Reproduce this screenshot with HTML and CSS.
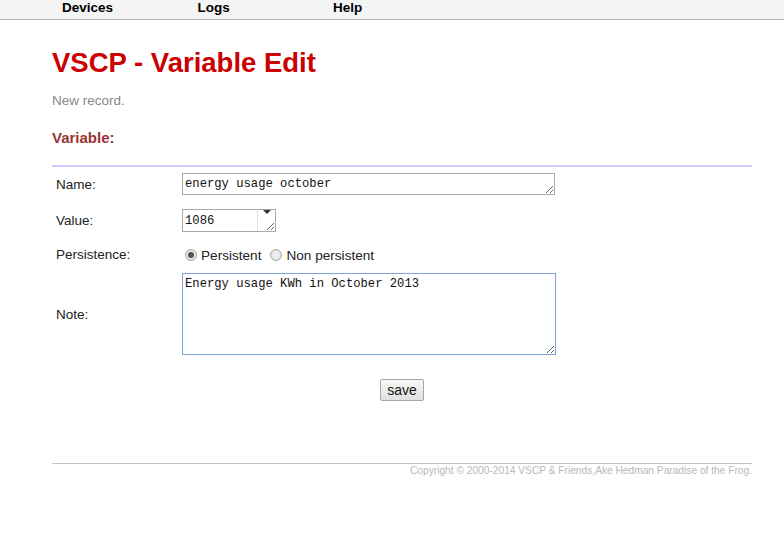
FILE: index.html
```html
<!DOCTYPE html>
<html lang="en">
<head>
<meta charset="utf-8">
<title>VSCP - Variable Edit</title>
<link rel="stylesheet" href="styles.css">
</head>
<body>
<nav class="topnav">
  <ul class="menu">
    <li><a href="#">Devices</a></li>
    <li><a href="#">Logs</a></li>
    <li><a href="#">Help</a></li>
  </ul>
</nav>
<main class="content">
  <h1 class="title">VSCP - Variable Edit</h1>
  <p class="status">New record.</p>
  <h2 class="section">Variable:</h2>
  <hr class="divider">
  <form class="form">
    <div class="row row-name">
      <label class="lbl">Name:</label>
      <textarea class="field f-name" rows="1" spellcheck="false">energy usage october</textarea>
    </div>
    <div class="row row-value">
      <label class="lbl">Value:</label>
      <span class="value-wrap">
        <textarea class="field f-value" rows="1" spellcheck="false">1086</textarea>
        <span class="spin"></span>
      </span>
    </div>
    <div class="row row-persist">
      <label class="lbl lbl-persist">Persistence:</label>
      <div class="radios">
        <label class="radio"><input type="radio" name="p" checked> Persistent</label>
        <label class="radio"><input type="radio" name="p"> Non persistent</label>
      </div>
    </div>
    <div class="row row-note">
      <label class="lbl">Note:</label>
      <textarea class="field f-note" spellcheck="false">Energy usage KWh in October 2013</textarea>
    </div>
    <div class="actions">
      <button type="button" class="btn">save</button>
    </div>
  </form>
  <footer class="footer">Copyright © 2000-2014 VSCP &amp; Friends,Ake Hedman Paradise of the Frog.</footer>
</main>
</body>
</html>
```
FILE: styles.css
```css
html, body {
  margin: 0;
  padding: 0;
  background: #ffffff;
  font-family: "Liberation Sans", Arial, sans-serif;
  color: #222;
}

.topnav {
  background: #f4f4f4;
  height: 19px;
  border-bottom: 1px solid #b8b8b8;
}
.menu {
  list-style: none;
  margin: 0;
  padding: 0 0 0 62px;
  display: flex;
}
.menu li {
  width: 135.5px;
}
.menu a {
  display: block;
  font-weight: bold;
  font-size: 13.5px;
  line-height: 15px;
  color: #000;
  text-decoration: none;
}

.content {
  margin-left: 52px;
  width: 700px;
}

.title {
  margin: 27px 0 0;
  font-size: 27.5px;
  line-height: 32px;
  font-weight: bold;
  color: #cc0000;
}

.status {
  margin: 14px 0 0;
  font-size: 13.5px;
  line-height: 16px;
  color: #888888;
}

.section {
  margin: 20px 0 0;
  font-size: 15px;
  line-height: 17px;
  font-weight: bold;
  color: #993333;
}

.divider {
  margin: 19px 0 0;
  border: 0;
  height: 2px;
  background: #ccccff;
}

.form {
  display: flex;
  flex-direction: column;
}
.row {
  display: flex;
  align-items: center;
}
.lbl {
  width: 126px;
  padding-left: 4px;
  font-size: 13.5px;
  color: #222;
}
.lbl-persist {
  position: relative;
  top: -1px;
}

.field {
  box-sizing: border-box;
  font-family: "Liberation Mono", "DejaVu Sans Mono", monospace;
  font-size: 12.2px;
  line-height: 14px;
  color: #111;
  border: 1px solid #a9a9a9;
  padding: 3px 2px 2px;
  margin: 0;
  background: #fff;
  display: block;
  overflow: hidden;
}
.row-name { margin-top: 6px; }
.f-name { width: 373px; height: 22px; }

.row-value { margin-top: 14px; }
.value-wrap {
  position: relative;
  display: block;
}
.f-value { width: 94px; height: 23px; padding-top: 4px; }
.spin {
  position: absolute;
  left: 75px;
  top: 1px;
  width: 17px;
  height: 21px;
  border-left: 1px solid #e3e3e3;
}
.spin::before {
  content: "";
  position: absolute;
  left: 5px;
  top: 0;
  border-left: 4px solid transparent;
  border-right: 4px solid transparent;
  border-top: 4px solid #333;
}

.row-persist { margin-top: 13px; height: 20px; }
.radios {
  display: flex;
  align-items: center;
  gap: 9px;
  font-size: 13.6px;
  color: #222;
}
.radio {
  display: flex;
  align-items: center;
  gap: 4px;
}
.radio input {
  -webkit-appearance: none;
  appearance: none;
  width: 12px;
  height: 12px;
  margin: 0 0 0 3px;
  border-radius: 50%;
  border: 1px solid #a8a8a8;
  background: radial-gradient(circle, #f2f2f2 0%, #dcdcdc 100%);
  box-sizing: border-box;
  position: relative;
}
.radio input:checked::after {
  content: "";
  position: absolute;
  left: 2px;
  top: 2px;
  width: 6px;
  height: 6px;
  border-radius: 50%;
  background: #555;
}
.radio + .radio input { margin-left: 0; }

.row-note { margin-top: 8px; }
.f-note {
  width: 374px;
  height: 82px;
  border-color: #7ba2d9;
  padding: 3px 2px;
}

.actions {
  margin-top: 24px;
  display: flex;
  justify-content: center;
}
.btn {
  width: 44px;
  height: 22px;
  padding: 0;
  font-family: "Liberation Sans", Arial, sans-serif;
  font-size: 14px;
  color: #111;
  background: linear-gradient(#f6f6f6, #e1e1e1);
  border: 1px solid #a6a6a6;
  border-radius: 2px;
}

.footer {
  margin-top: 62px;
  border-top: 1px solid #c4c4c4;
  padding-top: 1px;
  text-align: right;
  font-size: 10.2px;
  line-height: 12px;
  color: #b8b8b8;
}
```
